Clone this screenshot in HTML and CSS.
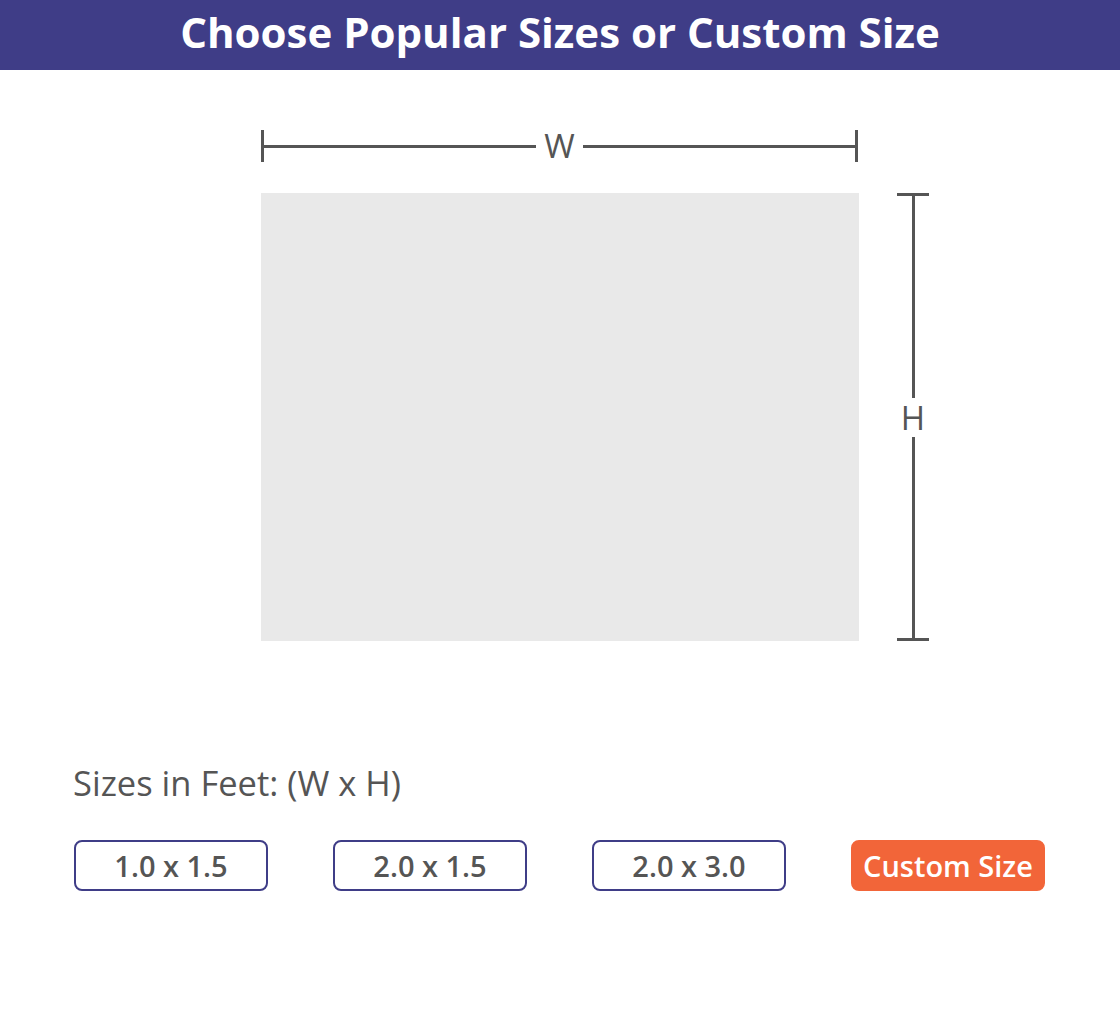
FILE: index.html
```html
<!DOCTYPE html>
<html lang="en">
<head>
<meta charset="utf-8">
<title>Choose Popular Sizes or Custom Size</title>
<link rel="stylesheet" href="styles.css">
</head>
<body>
<header class="banner">
  <h1 class="banner-title">Choose Popular Sizes or Custom Size</h1>
</header>

<main class="page">
  <section class="diagram">
    <div class="dim-w">
      <span class="tick-v"></span>
      <span class="line-h"></span>
      <span class="dim-label-w">W</span>
      <span class="line-h"></span>
      <span class="tick-v"></span>
    </div>
    <div class="preview"></div>
    <div class="dim-h">
      <span class="tick-h"></span>
      <span class="line-v"></span>
      <span class="dim-label-h">H</span>
      <span class="line-v"></span>
      <span class="tick-h"></span>
    </div>
  </section>

  <section class="sizes">
    <h2 class="sizes-title">Sizes in Feet: (W x H)</h2>
    <div class="size-options">
      <button class="size-btn">1.0 x 1.5</button>
      <button class="size-btn">2.0 x 1.5</button>
      <button class="size-btn">2.0 x 3.0</button>
      <button class="size-btn size-btn-custom">Custom Size</button>
    </div>
  </section>
</main>
</body>
</html>
```

FILE: styles.css
```css
* { box-sizing: border-box; }

html, body {
  margin: 0;
  padding: 0;
  background: #ffffff;
}

body {
  font-family: "Open Sans", "Noto Sans", sans-serif;
  color: #555555;
}

.banner {
  height: 70px;
  background: #3f3d87;
  padding-bottom: 6px;
}

.banner-title {
  margin: 0;
  font-size: 42px;
  font-weight: 700;
  line-height: 64px;
  color: #ffffff;
  text-align: center;
}

.page {
  display: flex;
  flex-direction: column;
}

.diagram {
  margin-top: 60px;
  display: grid;
  grid-template-columns: 70px 598px 70px;
  grid-template-rows: 32px 448px;
  row-gap: 31px;
  justify-content: center;
}

.dim-w {
  grid-column: 2;
  grid-row: 1;
  display: flex;
  align-items: center;
  padding-right: 1px;
}

.tick-v {
  width: 3px;
  height: 32px;
  background: #555555;
}

.line-h {
  flex: 1;
  height: 3px;
  background: #555555;
}

.dim-label-w {
  padding: 0 8px;
  font-size: 33px;
  line-height: 32px;
  font-weight: 400;
  color: #555555;
}

.preview {
  grid-column: 2;
  grid-row: 2;
  background: #e9e9e9;
}

.dim-h {
  grid-column: 3;
  grid-row: 2;
  width: 32px;
  margin-left: 38px;
  display: flex;
  flex-direction: column;
  align-items: center;
}

.tick-h {
  width: 32px;
  height: 3px;
  background: #555555;
}

.line-v {
  flex: 1;
  width: 3px;
  background: #555555;
}

.dim-label-h {
  margin: 8px 0;
  height: 23px;
  font-size: 33px;
  line-height: 24px;
  font-weight: 400;
  color: #555555;
}

.sizes {
  margin-top: 124px;
  padding: 0 73px;
}

.sizes-title {
  margin: 0;
  font-size: 34.5px;
  line-height: 36px;
  font-weight: 500;
  color: #555555;
}

.size-options {
  margin-top: 39px;
  margin-left: 1px;
  display: flex;
  gap: 65px;
}

.size-btn {
  width: 194px;
  height: 51px;
  padding: 0;
  border: 2px solid #3f3d87;
  border-radius: 8px;
  background: #ffffff;
  font-family: "Open Sans", "Noto Sans", sans-serif;
  font-size: 29px;
  font-weight: 600;
  color: #555555;
  line-height: 47px;
  text-align: center;
}

.size-btn-custom {
  background: #f26539;
  border-color: #f26539;
  color: #ffffff;
}
```
